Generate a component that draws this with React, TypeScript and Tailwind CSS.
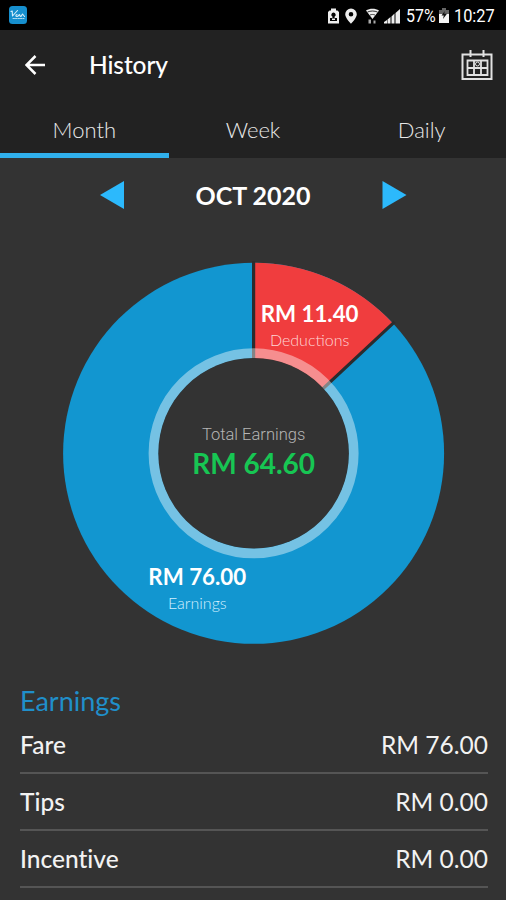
import clsx from "clsx";

const tabs = ["Month", "Week", "Daily"];

const earnings = [
  { label: "Fare", amount: "RM 76.00" },
  { label: "Tips", amount: "RM 0.00" },
  { label: "Incentive", amount: "RM 0.00" },
];

function StatusBar() {
  return (
    <div className="flex h-[30px] shrink-0 items-center justify-between bg-black pl-[9px] pr-[11px] text-white">
      <svg className="h-[18px] w-[18px]" viewBox="0 0 18 18">
        <rect width="18" height="18" rx="3.5" fill="#168fce" />
        <g fill="none" stroke="#d8effb" strokeLinecap="round" strokeLinejoin="round">
          <path d="M2 5.5 3.2 5 3.500 10 8.500 4.500M8 8.500c-1.500 0-1.500 2 0 2s2-2 2.500-2 0 2 1.500 2l1.500-2.500 2 2.500" strokeWidth="1.1" />
          <path d="M4 12.500h11" strokeWidth="0.8" strokeDasharray="1.5 1" />
        </g>
      </svg>
      <div className="flex items-center">
        <svg className="mt-px h-[18px] w-[74px]" viewBox="0 0 74 18" fill="#ededed">
          <path fillRule="evenodd" d="M3 1.500h5v2h1.500L11 5v11.500H0V5l1.500-1.500H3zM5.500 5.500a2.200 2.200 0 0 0-1.100 4.100V11H2v3h7v-3H6.600V9.600a2.200 2.200 0 0 0-1.100-4.100z" />
          <path d="M4 11.500h3V13H4z" />
          <path fillRule="evenodd" d="M23 1.500a5.800 5.800 0 0 0-5.800 5.800C17.200 11 23 16.800 23 16.800s5.800-5.800 5.800-9.500A5.800 5.800 0 0 0 23 1.500zm0 3.500a2.300 2.300 0 1 1 0 4.600 2.300 2.300 0 0 1 0-4.600z" />
          <path d="M38 3.500c3.600-2.500 9.400-2.500 13 0L44.500 12z" />
          <path d="M39.500 5c3-1.300 7-1.300 10 0" fill="none" stroke="#000" strokeWidth="0.800" />
          <path d="M42 8c1.600-.7 3.400-.7 5 0" fill="none" stroke="#000" strokeWidth="0.700" />
          <path d="M40.500 12.500h2.500v4h-2.500zM45.500 13.500h2v3h-2z" fill="#aaa" />
          <path d="M56 16.500v-1.500l3-2v3.500zM59.500 16.500v-4l3-2.500v6.500zM63.500 16.500V9.500l3-3v10zM67.500 16.500V6L72 2v14.500z" />
        </svg>
        <span className="ml-[4px] block w-[29px] whitespace-nowrap font-[Roboto,sans-serif] text-[19px] leading-[30px]">
          <span className="mt-[2px] block origin-left scale-x-[0.84]">57%</span>
        </span>
        <svg className="mt-px ml-[4px] h-[17px] w-[10px]" viewBox="0 0 10 17">
          <path d="M3 1h4v2h3v13H0V3h3z" fill="#666" />
          <path d="M0 7h10v9H0z" fill="#f5f5f5" />
          <path d="M5.800 4 2.500 8.500h2.300L4 12l4-5.200H5.200z" fill="#111" />
        </svg>
        <span className="ml-[5px] block w-[41px] whitespace-nowrap font-[Roboto,sans-serif] text-[19px] leading-[30px]">
          <span className="mt-[2px] block origin-left scale-x-[0.86]">10:27</span>
        </span>
      </div>
    </div>
  );
}

function CalendarIcon() {
  return (
    <svg className="h-[32px] w-[32px]" viewBox="0 0 32 32" fill="none" stroke="#e2e2e2">
      <path d="M1.500 5.500h29v24.500h-29z" strokeWidth="2" />
      <path d="M9.500 1v7M22.500 1v7" strokeWidth="2" />
      <path d="M6.500 11.500h20v14.500h-20zM6.500 19h20M13 11.500v14.500M20 11.500v14.500" strokeWidth="1.800" />
      <circle cx="16.500" cy="15" r="2" strokeWidth="1" />
    </svg>
  );
}

function EarningsChart() {
  return (
    <svg className="block h-[384px] w-[384px]" viewBox="-0.6 -0.3 384 384" fontFamily="Lato, sans-serif" textAnchor="middle">
      <circle cx="192" cy="192" r="190.500" fill="#1296d0" />
      <path d="M192 192V1.500A190.500 190.500 0 0 1 331.200 62z" fill="#f03d3e" />
      <path d="M192 192V0M192 192 333 60.500" stroke="#2b2c2e" strokeWidth="3.200" />
      <circle cx="192" cy="192" r="100" fill="none" stroke="#fff" strokeOpacity="0.420" strokeWidth="10" />
      <circle cx="192" cy="192" r="95.300" fill="#333" />
      <text x="248" y="60.500" fontSize="22.300" fontWeight="700" fill="#fff">RM 11.40</text>
      <text x="248" y="84.700" fontSize="16" fontWeight="300" fill="#ffd6d6">Deductions</text>
      <text x="192" y="178.700" fontSize="16.500" fontWeight="300" fontFamily="Roboto, sans-serif" fill="#b5b5b5">Total Earnings</text>
      <text x="192" y="213.200" fontSize="28" fontWeight="700" fill="#17c653">RM 64.60</text>
      <text x="135.700" y="323.500" fontSize="22.300" fontWeight="700" fill="#fff">RM 76.00</text>
      <text x="135.700" y="347.500" fontSize="16" fontWeight="300" fill="#d3f0ff">Earnings</text>
    </svg>
  );
}

export default function App() {
  return (
    <div className="flex h-[900px] w-[506px] flex-col overflow-hidden bg-[#333] font-[Lato,sans-serif] text-white">
      <StatusBar />

      <header className="h-[128px] shrink-0 bg-[#222]">
        <div className="flex h-[70px] items-center pl-[25px] pr-[13px]">
          <svg className="h-[20px] w-[21px]" viewBox="0 0 21 20" fill="none" stroke="#fff" strokeWidth="2.500">
            <path d="M20 10H2M10.500 1 1.500 10l9 9" />
          </svg>
          <h1 className="ml-[43px] flex-1 pt-px text-[24.500px] font-medium leading-none tracking-[-0.100px]">History</h1>
          <CalendarIcon />
        </div>
        <nav className="grid h-[58px] grid-cols-3">
          {tabs.map((tab, i) => (
            <button
              key={tab}
              className={clsx(
                "border-b-[5px] pt-[7px] text-[22px] font-light leading-[46px] text-[#e8e8e8]",
                i === 0 ? "border-[#30b0ec]" : "border-transparent"
              )}
            >
              {tab}
            </button>
          ))}
        </nav>
      </header>

      <div className="flex h-[74px] shrink-0 items-center justify-between px-[99px]">
        <svg className="h-[28px] w-[26px]" viewBox="0 0 26 28" fill="#2cb9fc">
          <path d="M1 14 25 0v28z" />
        </svg>
        <h2 className="text-[25px] font-bold leading-none">OCT 2020</h2>
        <svg className="h-[28px] w-[26px]" viewBox="0 0 26 28" fill="#2cb9fc">
          <path d="M25.500 14 1.500 0v28z" />
        </svg>
      </div>

      <div className="mt-[29px] flex h-[384px] shrink-0 justify-center">
        <EarningsChart />
      </div>

      <section className="mt-[38px] pl-[20px] pr-[18px]">
        <h3 className="h-[34px] text-[27px] leading-[35px] text-[#208fca]">Earnings</h3>
        <ul>
          {earnings.map((row) => (
            <li
              key={row.label}
              className="flex h-[57px] items-center justify-between border-b-2 border-[#555] pt-[2px] text-[24.500px] text-[#f2f2f2]"
            >
              <span className="font-medium [font-variant-ligatures:none]">{row.label}</span>
              <span>{row.amount}</span>
            </li>
          ))}
        </ul>
      </section>
    </div>
  );
}
